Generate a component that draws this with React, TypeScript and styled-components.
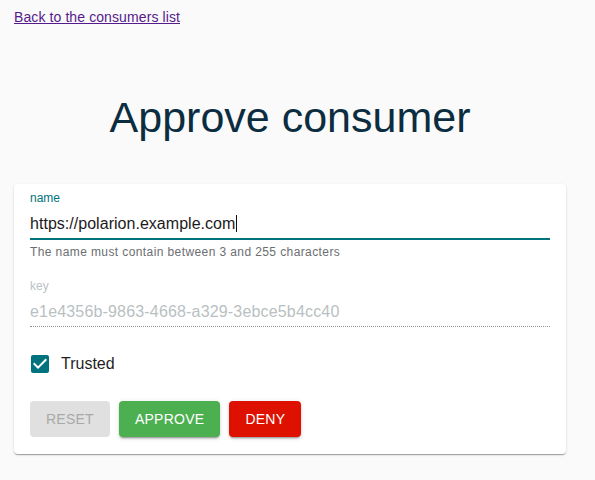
import React from "react";
import styled, { createGlobalStyle } from "styled-components";

const TEAL = "#00737e";

const GlobalStyle = createGlobalStyle`
  html, body {
    margin: 0;
    padding: 0;
    background: #fafafa;
    font-family: "Liberation Sans", Arial, sans-serif;
  }
`;

const Page = styled.div`
  padding: 8px 29px 0 14px;
  min-height: 472px;
  background: #fafafa;
`;

const BackLink = styled.a`
  display: inline-block;
  font-size: 14px;
  line-height: 16px;
  letter-spacing: 0.1px;
  color: #551a8b;
  text-decoration: underline;
`;

const Title = styled.h1`
  margin: 65px 0 41px;
  text-align: center;
  font-size: 43px;
  line-height: 52px;
  font-weight: 400;
  color: #0b2d3f;
`;

const Card = styled.form`
  background: #fff;
  border-radius: 4px;
  padding: 6px 16px 17px;
  box-shadow: 0 2px 1px -1px rgba(0, 0, 0, 0.2), 0 1px 1px 0 rgba(0, 0, 0, 0.14),
    0 1px 3px 0 rgba(0, 0, 0, 0.12);
`;

const Field = styled.div<{ $gap?: number }>`
  display: flex;
  flex-direction: column;
  margin-top: ${({ $gap }) => $gap ?? 0}px;
`;

const Label = styled.label<{ $disabled?: boolean }>`
  font-size: 12px;
  line-height: 16px;
  color: ${({ $disabled }) => ($disabled ? "#bcc2c5" : TEAL)};
`;

const InputBox = styled.div<{ $disabled?: boolean }>`
  margin-top: 6px;
  display: flex;
  align-items: center;
  height: 23px;
  font-size: 16px;
  line-height: 23px;
  letter-spacing: ${({ $disabled }) => ($disabled ? 0.17 : 0.03)}px;
  color: ${({ $disabled }) => ($disabled ? "#b9bfc2" : "#1b1b1b")};
  padding-bottom: 3px;
  border-bottom: ${({ $disabled }) =>
    $disabled ? "1px dotted rgba(0,0,0,0.42)" : `2px solid ${TEAL}`};
`;

const Caret = styled.span`
  display: inline-block;
  width: 1px;
  height: 17px;
  margin-left: 1px;
  background: #111;
`;

const Helper = styled.p`
  margin: 4px 0 0;
  font-size: 12px;
  line-height: 16px;
  letter-spacing: 0.4px;
  color: #6b6e70;
`;

const CheckRow = styled.label`
  display: flex;
  align-items: center;
  gap: 9px;
  margin: 25px 0 0 -2px;
  font-size: 16px;
  line-height: 24px;
  color: #1f1f1f;
`;

const Actions = styled.div`
  display: flex;
  gap: 9px;
  margin-top: 25px;
`;

const Button = styled.button<{ $tone: "disabled" | "success" | "danger" }>`
  height: 36px;
  min-width: 64px;
  padding: 0 16px;
  border: none;
  border-radius: 4px;
  font-family: "Liberation Sans", Arial, sans-serif;
  font-size: 14px;
  letter-spacing: 0.25px;
  text-transform: uppercase;
  cursor: pointer;
  background: ${({ $tone }) =>
    $tone === "success" ? "#4caf50" : $tone === "danger" ? "#de1100" : "#e0e0e0"};
  color: ${({ $tone }) => ($tone === "disabled" ? "#a9a9a9" : "#fff")};
  box-shadow: ${({ $tone }) =>
    $tone === "disabled"
      ? "none"
      : "0 3px 1px -2px rgba(0,0,0,0.2), 0 2px 2px 0 rgba(0,0,0,0.14), 0 1px 5px 0 rgba(0,0,0,0.12)"};
`;

const CheckIcon = () => (
  <svg width="24" height="24" viewBox="0 0 24 24" aria-hidden="true">
    <path
      fill={TEAL}
      d="M19 3H5c-1.11 0-2 .9-2 2v14c0 1.1.89 2 2 2h14c1.11 0 2-.9 2-2V5c0-1.1-.89-2-2-2zm-9 14l-5-5 1.41-1.41L10 14.17l7.59-7.59L19 8l-9 9z"
    />
  </svg>
);

export default function App() {
  return (
    <>
      <GlobalStyle />
      <Page>
        <BackLink href="#">Back to the consumers list</BackLink>
        <Title>Approve consumer</Title>
        <Card onSubmit={(e) => e.preventDefault()}>
          <Field>
            <Label>name</Label>
            <InputBox>
              https://polarion.example.com
              <Caret />
            </InputBox>
            <Helper>The name must contain between 3 and 255 characters</Helper>
          </Field>
          <Field $gap={18}>
            <Label $disabled>key</Label>
            <InputBox $disabled>e1e4356b-9863-4668-a329-3ebce5b4cc40</InputBox>
          </Field>
          <CheckRow>
            <CheckIcon />
            Trusted
          </CheckRow>
          <Actions>
            <Button type="button" $tone="disabled">
              Reset
            </Button>
            <Button type="button" $tone="success">
              Approve
            </Button>
            <Button type="button" $tone="danger">
              Deny
            </Button>
          </Actions>
        </Card>
      </Page>
    </>
  );
}
